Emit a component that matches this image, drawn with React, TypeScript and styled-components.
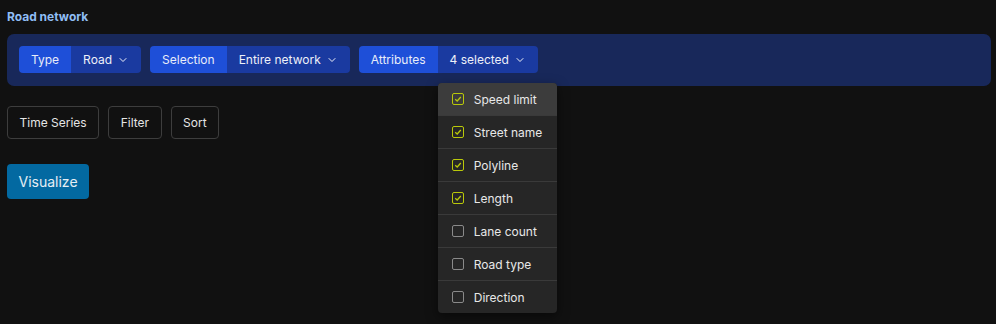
import React, { useState } from "react";
import styled, { createGlobalStyle } from "styled-components";
import { ChevronDown } from "lucide-react";

const GlobalStyle = createGlobalStyle`
  html, body {
    margin: 0;
    padding: 0;
    background: #111111;
  }
  body {
    font-family: Inter, "Noto Sans", sans-serif;
    color: #e5e5e5;
  }
`;

const Page = styled.div`
  min-height: 100vh;
  box-sizing: border-box;
  padding: 9px 5px 0 7px;
`;

const Title = styled.h3`
  margin: 0 0 9px;
  font-size: 12px;
  line-height: 16px;
  font-weight: 700;
  color: #8fbdf4;
`;

const Panel = styled.div`
  display: flex;
  gap: 9px;
  padding: 12px 12px 13px;
  background: #18285a;
  border-radius: 7px;
`;

const Group = styled.div`
  position: relative;
  display: flex;
  height: 27px;
  border-radius: 4px;
`;

const Label = styled.div`
  display: flex;
  align-items: center;
  padding: 0 12px;
  background: #1e4fd8;
  color: #e8ecf8;
  font-size: 12px;
  border-radius: 4px 0 0 4px;
`;

const Value = styled.button`
  display: flex;
  align-items: center;
  gap: 5px;
  padding: 0 12px;
  background: #1a3aa0;
  color: #eef0f8;
  font-family: inherit;
  font-size: 12px;
  border: none;
  border-radius: 0 4px 4px 0;
  cursor: pointer;
`;

const Menu = styled.div`
  position: absolute;
  top: 37px;
  left: 79px;
  width: 119px;
  background: #262626;
  border-radius: 4px;
  box-shadow: 0 4px 12px rgba(0, 0, 0, 0.5);
  overflow: hidden;
  z-index: 10;
`;

const Item = styled.label<{ $active?: boolean }>`
  display: flex;
  align-items: center;
  gap: 10px;
  height: 32px;
  padding: 0 14px;
  background: ${(p) => (p.$active ? "#3c3c3c" : "transparent")};
  font-size: 12px;
  white-space: nowrap;
  color: #e8e8e8;
  cursor: pointer;
  & + & {
    border-top: 1px solid #3a3a3a;
  }
`;

const Box = styled.span<{ $checked: boolean }>`
  display: flex;
  align-items: center;
  justify-content: center;
  flex: none;
  width: 12px;
  height: 12px;
  box-sizing: border-box;
  border: 1.5px solid ${(p) => (p.$checked ? "#b9c80a" : "#8a8a8a")};
  border-radius: 2px;
`;

const ButtonRow = styled.div`
  display: flex;
  gap: 9px;
  margin-top: 20px;
`;

const OutlineButton = styled.button`
  height: 33px;
  padding: 0 11.5px;
  background: transparent;
  border: 1px solid #3d3d3d;
  border-radius: 4px;
  color: #e5e5e5;
  font-family: inherit;
  font-size: 12px;
  cursor: pointer;
`;

const PrimaryButton = styled.button`
  margin-top: 25px;
  height: 35px;
  padding: 0 11.5px;
  background: #0369a1;
  border: none;
  border-radius: 4px;
  color: #e6eef4;
  font-family: inherit;
  font-size: 14px;
  cursor: pointer;
`;

const attributes = [
  { name: "Speed limit", checked: true },
  { name: "Street name", checked: true },
  { name: "Polyline", checked: true },
  { name: "Length", checked: true },
  { name: "Lane count", checked: false },
  { name: "Road type", checked: false },
  { name: "Direction", checked: false },
];

const Check = () => (
  <svg width="8" height="8" viewBox="0 0 8 8">
    <path d="M1.2 4.2 L3.2 6 L6.8 2" fill="none" stroke="#b9c80a" strokeWidth="1.3" />
  </svg>
);

const App = () => {
  const [items, setItems] = useState(attributes);
  const count = items.filter((i) => i.checked).length;

  const toggle = (name: string) =>
    setItems(items.map((i) => (i.name === name ? { ...i, checked: !i.checked } : i)));

  return (
    <Page>
      <GlobalStyle />
      <Title>Road network</Title>
      <Panel>
        <Group>
          <Label>Type</Label>
          <Value>
            Road <ChevronDown size={12} strokeWidth={2} />
          </Value>
        </Group>
        <Group>
          <Label>Selection</Label>
          <Value>
            Entire network <ChevronDown size={12} strokeWidth={2} />
          </Value>
        </Group>
        <Group>
          <Label>Attributes</Label>
          <Value>
            {count} selected <ChevronDown size={12} strokeWidth={2} />
          </Value>
          <Menu>
            {items.map((item, idx) => (
              <Item key={item.name} $active={idx === 0} onClick={() => toggle(item.name)}>
                <Box $checked={item.checked}>{item.checked && <Check />}</Box>
                {item.name}
              </Item>
            ))}
          </Menu>
        </Group>
      </Panel>
      <ButtonRow>
        <OutlineButton>Time Series</OutlineButton>
        <OutlineButton>Filter</OutlineButton>
        <OutlineButton>Sort</OutlineButton>
      </ButtonRow>
      <PrimaryButton>Visualize</PrimaryButton>
    </Page>
  );
};

export default App;
